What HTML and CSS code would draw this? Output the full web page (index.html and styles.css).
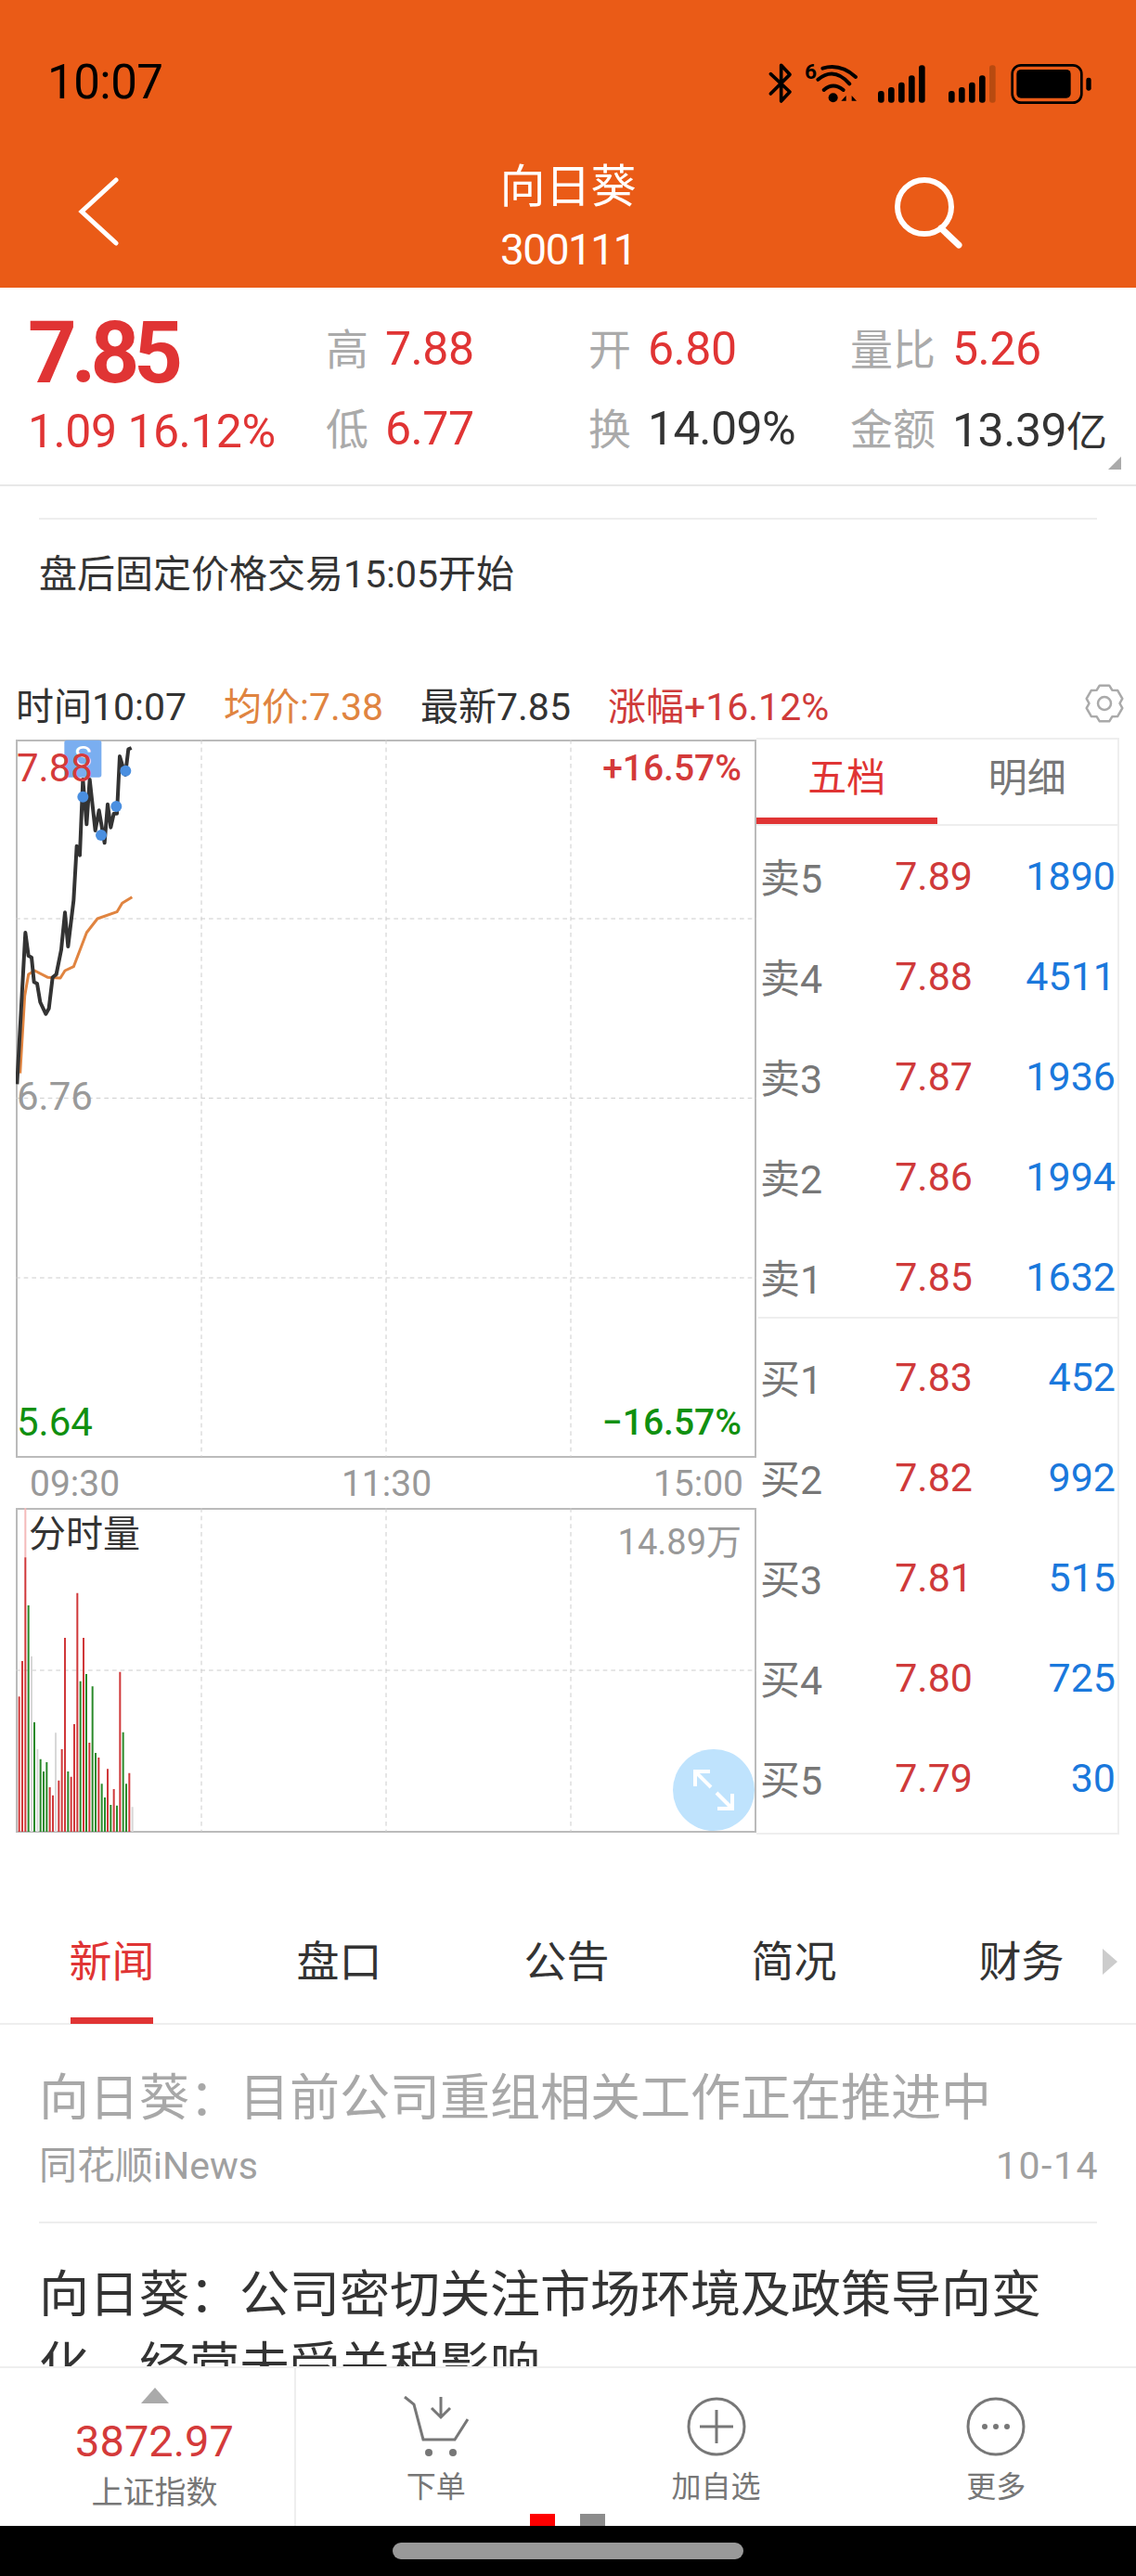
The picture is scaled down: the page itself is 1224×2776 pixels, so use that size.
FILE: index.html
```html
<!DOCTYPE html>
<html lang="zh-CN">
    <head>
        <title>向日葵 300111</title>
        <meta charset="utf-8" />
        <meta name="viewport" content="width=device-width, initial-scale=1.0" />
        <link rel="stylesheet" href="styles.css">
    </head>
    <body>
        <div id="app">
            <div id="top">
                <div class="status">
                    <span class="clock">10:07</span>
                    <svg class="status-icons" width="350" height="62" viewBox="140 58 1050 186">
                        <path d="M150 120L212 178L184 208V92L212 122L150 184" fill="none" stroke="#000" stroke-width="11" stroke-linecap="round" stroke-linejoin="round"/>
                        <text x="260" y="135" class="six">6</text>
                        <g fill="none" stroke="#000" stroke-width="12" stroke-linecap="round">
                            <path d="M318 102Q375 85 425 130"/>
                            <path d="M303 138Q355 95 405 152"/>
                            <path d="M322 172Q352 145 385 172"/>
                        </g>
                        <circle cx="352" cy="197" r="15"/>
                        <path d="M378 207L394 190V207ZM412 190L428 207H412Z"/>
                        <g fill="#000">
                            <rect x="497" y="175" width="20" height="38" rx="9"/>
                            <rect x="530" y="163" width="20" height="50" rx="9"/>
                            <rect x="563" y="147" width="20" height="66" rx="9"/>
                            <rect x="596" y="125" width="20" height="88" rx="9"/>
                            <rect x="629" y="92" width="20" height="121" rx="9"/>
                            <rect x="725" y="175" width="20" height="38" rx="9"/>
                            <rect x="758" y="163" width="20" height="50" rx="9"/>
                            <rect x="791" y="147" width="20" height="66" rx="9"/>
                            <rect x="824" y="125" width="20" height="88" rx="9"/>
                            <rect x="857" y="92" width="20" height="121" rx="9" fill="#b84a10"/>
                            <rect x="945" y="106" width="175" height="92" rx="14"/>
                            <rect x="1170" y="132" width="16" height="42" rx="7"/>
                        </g>
                        <rect x="931" y="92" width="224" height="121" rx="28" fill="none" stroke="#000" stroke-width="8"/>
                    </svg>
                </div>
                <div class="titlebar">
                    <svg class="back" width="44" height="74" viewBox="0 0 44 74">
                        <path d="M41 3L4 37L41 71" fill="none" stroke="#fff" stroke-width="5" stroke-linecap="round"/>
                    </svg>
                    <div class="title">
                        <div class="name">向日葵</div>
                        <div class="code">300111</div>
                    </div>
                    <svg class="search" width="78" height="78" viewBox="0 0 78 78">
                        <circle cx="34" cy="32" r="29" fill="none" stroke="#fff" stroke-width="6"/>
                        <path d="M52 55L71 73" fill="none" stroke="#fff" stroke-width="7" stroke-linecap="round"/>
                    </svg>
                </div>
            </div>

            <div class="quote">
                <div class="price red">7.85</div>
                <div class="cell"><span class="key">高</span><span class="val red">7.88</span></div>
                <div class="cell"><span class="key">开</span><span class="val red">6.80</span></div>
                <div class="cell"><span class="key">量比</span><span class="val red">5.26</span></div>
                <div class="change red">1.09 16.12%</div>
                <div class="cell"><span class="key">低</span><span class="val red">6.77</span></div>
                <div class="cell"><span class="key">换</span><span class="val dark">14.09%</span></div>
                <div class="cell"><span class="key">金额</span><span class="val dark">13.39<span class="unit">亿</span></span></div>
                <span class="corner"></span>
            </div>

            <div class="notice">盘后固定价格交易15:05开始</div>

            <div class="chart-head">
                <span class="dark">时间10:07</span>
                <span class="avg">均价:7.38</span>
                <span class="dark">最新7.85</span>
                <span class="red-soft">涨幅+16.12%</span>
                <svg class="gear" width="42" height="42" viewBox="0 0 42 42">
                    <path d="M15.8 1.7L26.2 1.7L29.25 6.7L35.1 6.9L40.3 15.8L37.5 21L40.3 26.2L35.1 35.1L29.25 35.3L26.2 40.3H15.8L12.75 35.3L6.9 35.1L1.7 26.2L4.5 21L1.7 15.8L6.9 6.9L12.75 6.7Z" fill="none" stroke="#aaa" stroke-width="2.5" stroke-linejoin="round"/>
                    <circle cx="21" cy="21" r="7" fill="none" stroke="#aaa" stroke-width="2.5"/>
                </svg>
            </div>

            <div class="board">
                <div class="charts">
                    <div class="price-chart">
                        <svg class="plot" width="798" height="773" viewBox="51 231 2394 2319">
                            <g class="grid">
                                <path d="M651 231V2550M1248 231V2550M1845 231V2550"/>
                                <path d="M51 810H2445M51 1390H2445M51 1971H2445"/>
                            </g>
                            <rect x="208" y="233" width="120" height="120" rx="8" fill="#7aaef0"/>
                            <text x="268" y="318" class="badge">S</text>
                            <path class="line-avg" d="M65 1310L80 1060L92 990L112 978L155 1000L195 1002L210 978L238 965L280 855L315 810L378 788L395 760L427 740"/>
                            <path class="line-price" d="M55 1345L82 855L92 930L102 935L110 1015L120 1020L130 1080L148 1118L158 1100L170 1000L182 990L198 910L210 790L220 900L238 750L248 575L258 605L268 360L280 505L290 360L308 525L320 460L338 565L348 440L358 515L368 470L378 470L387 285L405 345L415 262L425 258"/>
                            <g fill="#4a8fe0">
                                <circle cx="268" cy="416" r="18"/>
                                <circle cx="327" cy="540" r="18"/>
                                <circle cx="376" cy="447" r="18"/>
                                <circle cx="406" cy="332" r="18"/>
                            </g>
                        </svg>
                        <span class="axis high">7.88</span>
                        <span class="axis mid">6.76</span>
                        <span class="axis low">5.64</span>
                        <span class="pct up">+16.57%</span>
                        <span class="pct down">−16.57%</span>
                    </div>
                    <div class="times">
                        <span>09:30</span>
                        <span>11:30</span>
                        <span>15:00</span>
                    </div>
                    <div class="vol-chart">
                        <svg class="plot" width="798" height="349" viewBox="51 315 2394 1047">
                            <g class="grid">
                                <path d="M651 315V1362M1248 315V1362M1845 315V1362"/>
                                <path d="M51 840H2445"/>
                            </g>
                            <path class="bar-pale" d="M82 315V475"/>
                            <path class="bar-red" d="M62 1362V925M72 1362V810M82 1362V475M161 1362V1218M171 1362V1244M190 1362V1196M200 1362V1095M210 1362V735M230 1362V1184M240 1362V1014M250 1362V590M270 1362V735M289 1362V1074M319 1362V1122M348 1362V1159M368 1362V1224M388 1362V845M418 1362V1172"/>
                            <path class="bar-green" d="M92 1362V630M111 1362V1008M131 1362V1127M141 1362V1167M151 1362V1137M220 1362V1167M260 1362V875M279 1362V852M299 1362V892M309 1362V1107M329 1362V1207M339 1362V1251M358 1362V1275M378 1362V1277M398 1362V1040M408 1362V1207"/>
                            <path class="bar-gray" d="M102 1362V795M121 1362V1095M180 1362V1042M428 1362V1282"/>
                        </svg>
                        <span class="vol-name">分时量</span>
                        <span class="vol-max">14.89万</span>
                        <div class="expand">
                            <svg width="44" height="44" viewBox="0 0 44 44">
                                <path d="M2 18V2H18M2 2L19 19M42 26V42H26M42 42L25 25" fill="none" stroke="#fff" stroke-width="4"/>
                            </svg>
                        </div>
                    </div>
                </div>
                <div class="book">
                    <div class="book-tabs">
                        <div class="book-tab on">五档</div>
                        <div class="book-tab">明细</div>
                    </div>
                    <div class="level"><span class="lv">卖5</span><span class="lp">7.89</span><span class="lq">1890</span></div>
                    <div class="level"><span class="lv">卖4</span><span class="lp">7.88</span><span class="lq">4511</span></div>
                    <div class="level"><span class="lv">卖3</span><span class="lp">7.87</span><span class="lq">1936</span></div>
                    <div class="level"><span class="lv">卖2</span><span class="lp">7.86</span><span class="lq">1994</span></div>
                    <div class="level"><span class="lv">卖1</span><span class="lp">7.85</span><span class="lq">1632</span></div>
                    <div class="level first-buy"><span class="lv">买1</span><span class="lp">7.83</span><span class="lq">452</span></div>
                    <div class="level"><span class="lv">买2</span><span class="lp">7.82</span><span class="lq">992</span></div>
                    <div class="level"><span class="lv">买3</span><span class="lp">7.81</span><span class="lq">515</span></div>
                    <div class="level"><span class="lv">买4</span><span class="lp">7.80</span><span class="lq">725</span></div>
                    <div class="level"><span class="lv">买5</span><span class="lp">7.79</span><span class="lq">30</span></div>
                </div>
            </div>

            <div class="tabs">
                <div class="tab on">新闻</div>
                <div class="tab">盘口</div>
                <div class="tab">公告</div>
                <div class="tab">简况</div>
                <div class="tab">财务</div>
                <span class="more-arrow"></span>
            </div>

            <div class="news">
                <div class="story">
                    <div class="headline read">向日葵：目前公司重组相关工作正在推进中</div>
                    <div class="meta"><span>同花顺iNews</span><span class="date">10-14</span></div>
                </div>
                <div class="story">
                    <div class="headline">向日葵：公司密切关注市场环境及政策导向变化，经营未受关税影响</div>
                </div>
            </div>

            <div class="bottom">
                <div class="index">
                    <span class="index-arrow"></span>
                    <div class="index-value">3872.97</div>
                    <div class="index-name">上证指数</div>
                </div>
                <div class="action">
                    <svg width="70" height="66" viewBox="0 0 70 66">
                        <path d="M1 1L11 9L21 47H55L69 25" fill="none" stroke="#777" stroke-width="3"/>
                        <path d="M40 1V22M30 13L40 23L50 13" fill="none" stroke="#777" stroke-width="3"/>
                        <circle cx="27" cy="61" r="4" fill="#777"/>
                        <circle cx="53" cy="61" r="4" fill="#777"/>
                    </svg>
                    <span>下单</span>
                </div>
                <div class="action">
                    <svg width="66" height="66" viewBox="0 0 66 66">
                        <circle cx="33" cy="33" r="30" fill="none" stroke="#777" stroke-width="3"/>
                        <path d="M33 15V51M15 33H51" fill="none" stroke="#777" stroke-width="3"/>
                    </svg>
                    <span>加自选</span>
                </div>
                <div class="action">
                    <svg width="66" height="66" viewBox="0 0 66 66">
                        <circle cx="33" cy="33" r="30" fill="none" stroke="#777" stroke-width="3"/>
                        <circle cx="21" cy="33" r="3" fill="#777"/>
                        <circle cx="33" cy="33" r="3" fill="#777"/>
                        <circle cx="45" cy="33" r="3" fill="#777"/>
                    </svg>
                    <span>更多</span>
                </div>
                <div class="pager"><i class="dot active"></i><i class="dot"></i></div>
            </div>

            <div class="home-bar"><span class="pill"></span></div>
        </div>
    </body>
</html>
```

FILE: styles.css
```css
html, body {
    margin: 0px;
    padding: 0px;
    background: white;
    font-family: Roboto, "Noto Sans CJK SC", sans-serif;
}
#app {
    display: flex;
    flex-direction: column;
    width: 1224px;
    height: 2776px;
    overflow: hidden;
}
.red {
    color: #e03434;
}
.red-soft {
    color: #cf3a3a;
}
.dark {
    color: #333;
}

/* top bar */
#top {
    flex: none;
    height: 310px;
    background: #ea5b17;
}
.status {
    display: flex;
    align-items: center;
    justify-content: space-between;
    box-sizing: border-box;
    padding: 46px 47px 0px 51px;
    height: 130px;
}
.clock {
    color: black;
    font-size: 51px;
    letter-spacing: -0.5px;
}
.status-icons {
    margin-top: 4px;
}
.six {
    font-size: 68px;
    font-weight: bold;
    font-family: Roboto, sans-serif;
}
.titlebar {
    display: grid;
    grid-template-columns: 1fr auto 1fr;
    align-items: start;
}
.back {
    margin: 61px 0px 0px 84px;
}
.title {
    margin-top: 39px;
    color: white;
    text-align: center;
}
.name {
    line-height: 66px;
    font-size: 49px;
}
.code {
    line-height: 68px;
    font-size: 46px;
    letter-spacing: -1.5px;
}
.search {
    justify-self: end;
    margin: 61px 184px 0px 0px;
}

/* quote */
.quote {
    position: relative;
    flex: none;
    display: grid;
    grid-template-columns: 321px 283px 282px 1fr;
    grid-template-rows: 86px 86px;
    box-sizing: border-box;
    padding: 23px 0px 0px 30px;
    height: 214px;
    border-bottom: 2px solid #e8e8e8;
}
.price {
    padding-top: 5px;
    line-height: 86px;
    font-size: 92px;
    font-weight: bold;
    letter-spacing: -6px;
}
.change {
    padding-top: 3px;
    line-height: 86px;
    font-size: 50px;
    letter-spacing: -0.5px;
}
.cell {
    display: flex;
    align-items: center;
    gap: 18px;
    font-size: 46px;
}
.key {
    margin-bottom: 6px;
    color: #aaa;
}
.val {
    font-size: 50px;
    letter-spacing: -0.5px;
}
.unit {
    font-size: 44px;
}
.corner {
    position: absolute;
    right: 16px;
    bottom: 16px;
    border-left: 14px solid transparent;
    border-bottom: 14px solid #aaa;
}

/* notice */
.notice {
    flex: none;
    margin: 34px 42px 0px;
    border-top: 2px solid #eee;
    height: 175px;
    line-height: 118px;
    color: #333;
    font-size: 41px;
}

/* chart */
.chart-head {
    flex: none;
    display: flex;
    align-items: center;
    gap: 40px;
    padding: 0px 13px 0px 17px;
    height: 46px;
    font-size: 41px;
}
.avg {
    color: #e08440;
}
.gear {
    margin-left: auto;
}
.board {
    flex: none;
    display: flex;
    margin-top: 16px;
    padding-left: 17px;
}
.charts {
    width: 798px;
}
.price-chart, .vol-chart {
    position: relative;
    box-sizing: border-box;
    border: 2px solid #bbb;
}
.price-chart {
    height: 774px;
}
.vol-chart {
    height: 350px;
}
.plot {
    position: absolute;
    top: -2px;
    left: -2px;
}
.grid path {
    fill: none;
    stroke: #ccc;
    stroke-width: 3;
    stroke-dasharray: 14 12;
}
.badge {
    fill: white;
    font-size: 96px;
    text-anchor: middle;
}
.line-price {
    fill: none;
    stroke: #333;
    stroke-width: 12;
    stroke-linejoin: round;
}
.line-avg {
    fill: none;
    stroke: #e08440;
    stroke-width: 9;
    stroke-linejoin: round;
}
.bar-red, .bar-green, .bar-gray, .bar-pale {
    fill: none;
    stroke-width: 6;
}
.bar-red {
    stroke: #d0383a;
}
.bar-green {
    stroke: #2a8a2a;
}
.bar-gray {
    stroke: #d8d8d8;
}
.bar-pale {
    stroke: #f4baba;
}
.axis {
    position: absolute;
    left: -1px;
    line-height: 50px;
    font-size: 42px;
}
.axis.high {
    top: 4px;
    color: #d43a3a;
}
.axis.mid {
    top: 358px;
    color: #9a9a9a;
}
.axis.low {
    top: 709px;
    color: #109010;
}
.pct {
    position: absolute;
    right: 14px;
    line-height: 50px;
    font-size: 39px;
    font-weight: 500;
}
.pct.up {
    top: 4px;
    color: #d43a3a;
}
.pct.down {
    top: 709px;
    color: #109010;
}
.times {
    display: flex;
    justify-content: space-between;
    padding: 0px 14px 0px 15px;
    height: 54px;
    line-height: 56px;
    color: #999;
    font-size: 39px;
}
.vol-name {
    position: absolute;
    top: 1px;
    left: 12px;
    line-height: 52px;
    color: #333;
    font-size: 40px;
}
.vol-max {
    position: absolute;
    top: 9px;
    right: 14px;
    line-height: 52px;
    color: #999;
    font-size: 38px;
}
.expand {
    position: absolute;
    right: 0px;
    bottom: 0px;
    display: flex;
    align-items: center;
    justify-content: center;
    border-radius: 50%;
    width: 88px;
    height: 88px;
    background: #bfe3fd;
}

/* order book */
.book {
    box-sizing: border-box;
    margin-top: -2px;
    border: 2px solid #eee;
    border-left: none;
    width: 391px;
    height: 1182px;
}
.book-tabs {
    display: flex;
    height: 93px;
    margin-top: -2px;
    border-bottom: 2px solid #eee;
}
.book-tab {
    flex: 1;
    line-height: 88px;
    text-align: center;
    color: #777;
    font-size: 42px;
}
.book-tab.on {
    box-sizing: border-box;
    height: 93px;
    border-bottom: 7px solid #e03434;
    color: #e03434;
}
.level {
    position: relative;
    display: grid;
    grid-template-columns: 98px 131px 1fr;
    align-items: center;
    box-sizing: border-box;
    padding: 0px 2px 0px 4px;
    height: 108px;
    font-size: 43px;
}
.first-buy::before {
    content: "";
    position: absolute;
    top: -11px;
    left: 2px;
    right: 0px;
    border-top: 2px solid #eee;
}
.lv {
    margin-bottom: 3px;
    color: #777;
}
.lp {
    text-align: right;
    color: #cf3a3a;
}
.lq {
    text-align: right;
    color: #1a78dc;
}

/* tabs */
.tabs {
    flex: none;
    position: relative;
    display: flex;
    box-sizing: border-box;
    margin-top: 59px;
    border-bottom: 2px solid #eee;
    height: 146px;
}
.tab {
    position: relative;
    width: 245px;
    height: 144px;
    line-height: 156px;
    text-align: center;
    color: #333;
    font-size: 46px;
}
.tab:first-child {
    margin-left: -2px;
    color: #e03434;
}
.tab.on::after {
    content: "";
    position: absolute;
    left: 78px;
    right: 78px;
    bottom: -1px;
    height: 7px;
    background: #e03434;
}
.more-arrow {
    position: absolute;
    right: 20px;
    top: 64px;
    border-top: 14px solid transparent;
    border-bottom: 14px solid transparent;
    border-left: 16px solid #ccc;
}

/* news */
.news {
    flex: 1;
    overflow: hidden;
    padding: 0px 42px;
}
.story {
    box-sizing: border-box;
    padding-top: 39px;
}
.story:first-child {
    border-bottom: 2px solid #eee;
    padding-top: 48px;
    height: 214px;
}
.headline {
    line-height: 77px;
    color: #333;
    font-size: 54px;
}
.headline.read {
    line-height: 64px;
    color: #a8a8a8;
}
.meta {
    display: flex;
    justify-content: space-between;
    margin-top: 15px;
    line-height: 50px;
    color: #a0a0a0;
    font-size: 41px;
}
.date {
    letter-spacing: 1.5px;
    margin-right: -2px;
}

/* bottom bar */
.bottom {
    flex: none;
    position: relative;
    display: flex;
    box-sizing: border-box;
    border-top: 2px solid #eee;
    height: 172px;
    background: white;
}
.index {
    display: flex;
    flex-direction: column;
    align-items: center;
    box-sizing: border-box;
    border-right: 2px solid #eee;
    padding: 21px 0px 0px 16px;
    width: 319px;
    height: 170px;
}
.index-arrow {
    border-left: 15px solid transparent;
    border-right: 15px solid transparent;
    border-bottom: 17px solid #aaa;
}
.index-value {
    margin-top: 14px;
    line-height: 54px;
    color: #d43a3a;
    font-size: 47px;
}
.index-name {
    line-height: 56px;
    color: #777;
    font-size: 34px;
}
.action {
    display: flex;
    flex-direction: column;
    align-items: center;
    flex: 1;
    padding-top: 30px;
    color: #777;
    font-size: 32px;
}
.action span {
    margin-top: 8px;
    line-height: 48px;
}
.pager {
    position: absolute;
    left: 571px;
    bottom: 0px;
    display: flex;
    gap: 27px;
}
.dot {
    display: block;
    width: 27px;
    height: 13px;
    background: #8c8c8c;
}
.dot.active {
    background: #f00;
}
.home-bar {
    flex: none;
    display: flex;
    align-items: center;
    justify-content: center;
    height: 54px;
    background: black;
}
.pill {
    border-radius: 9px;
    width: 378px;
    height: 18px;
    background: #999;
}
```
